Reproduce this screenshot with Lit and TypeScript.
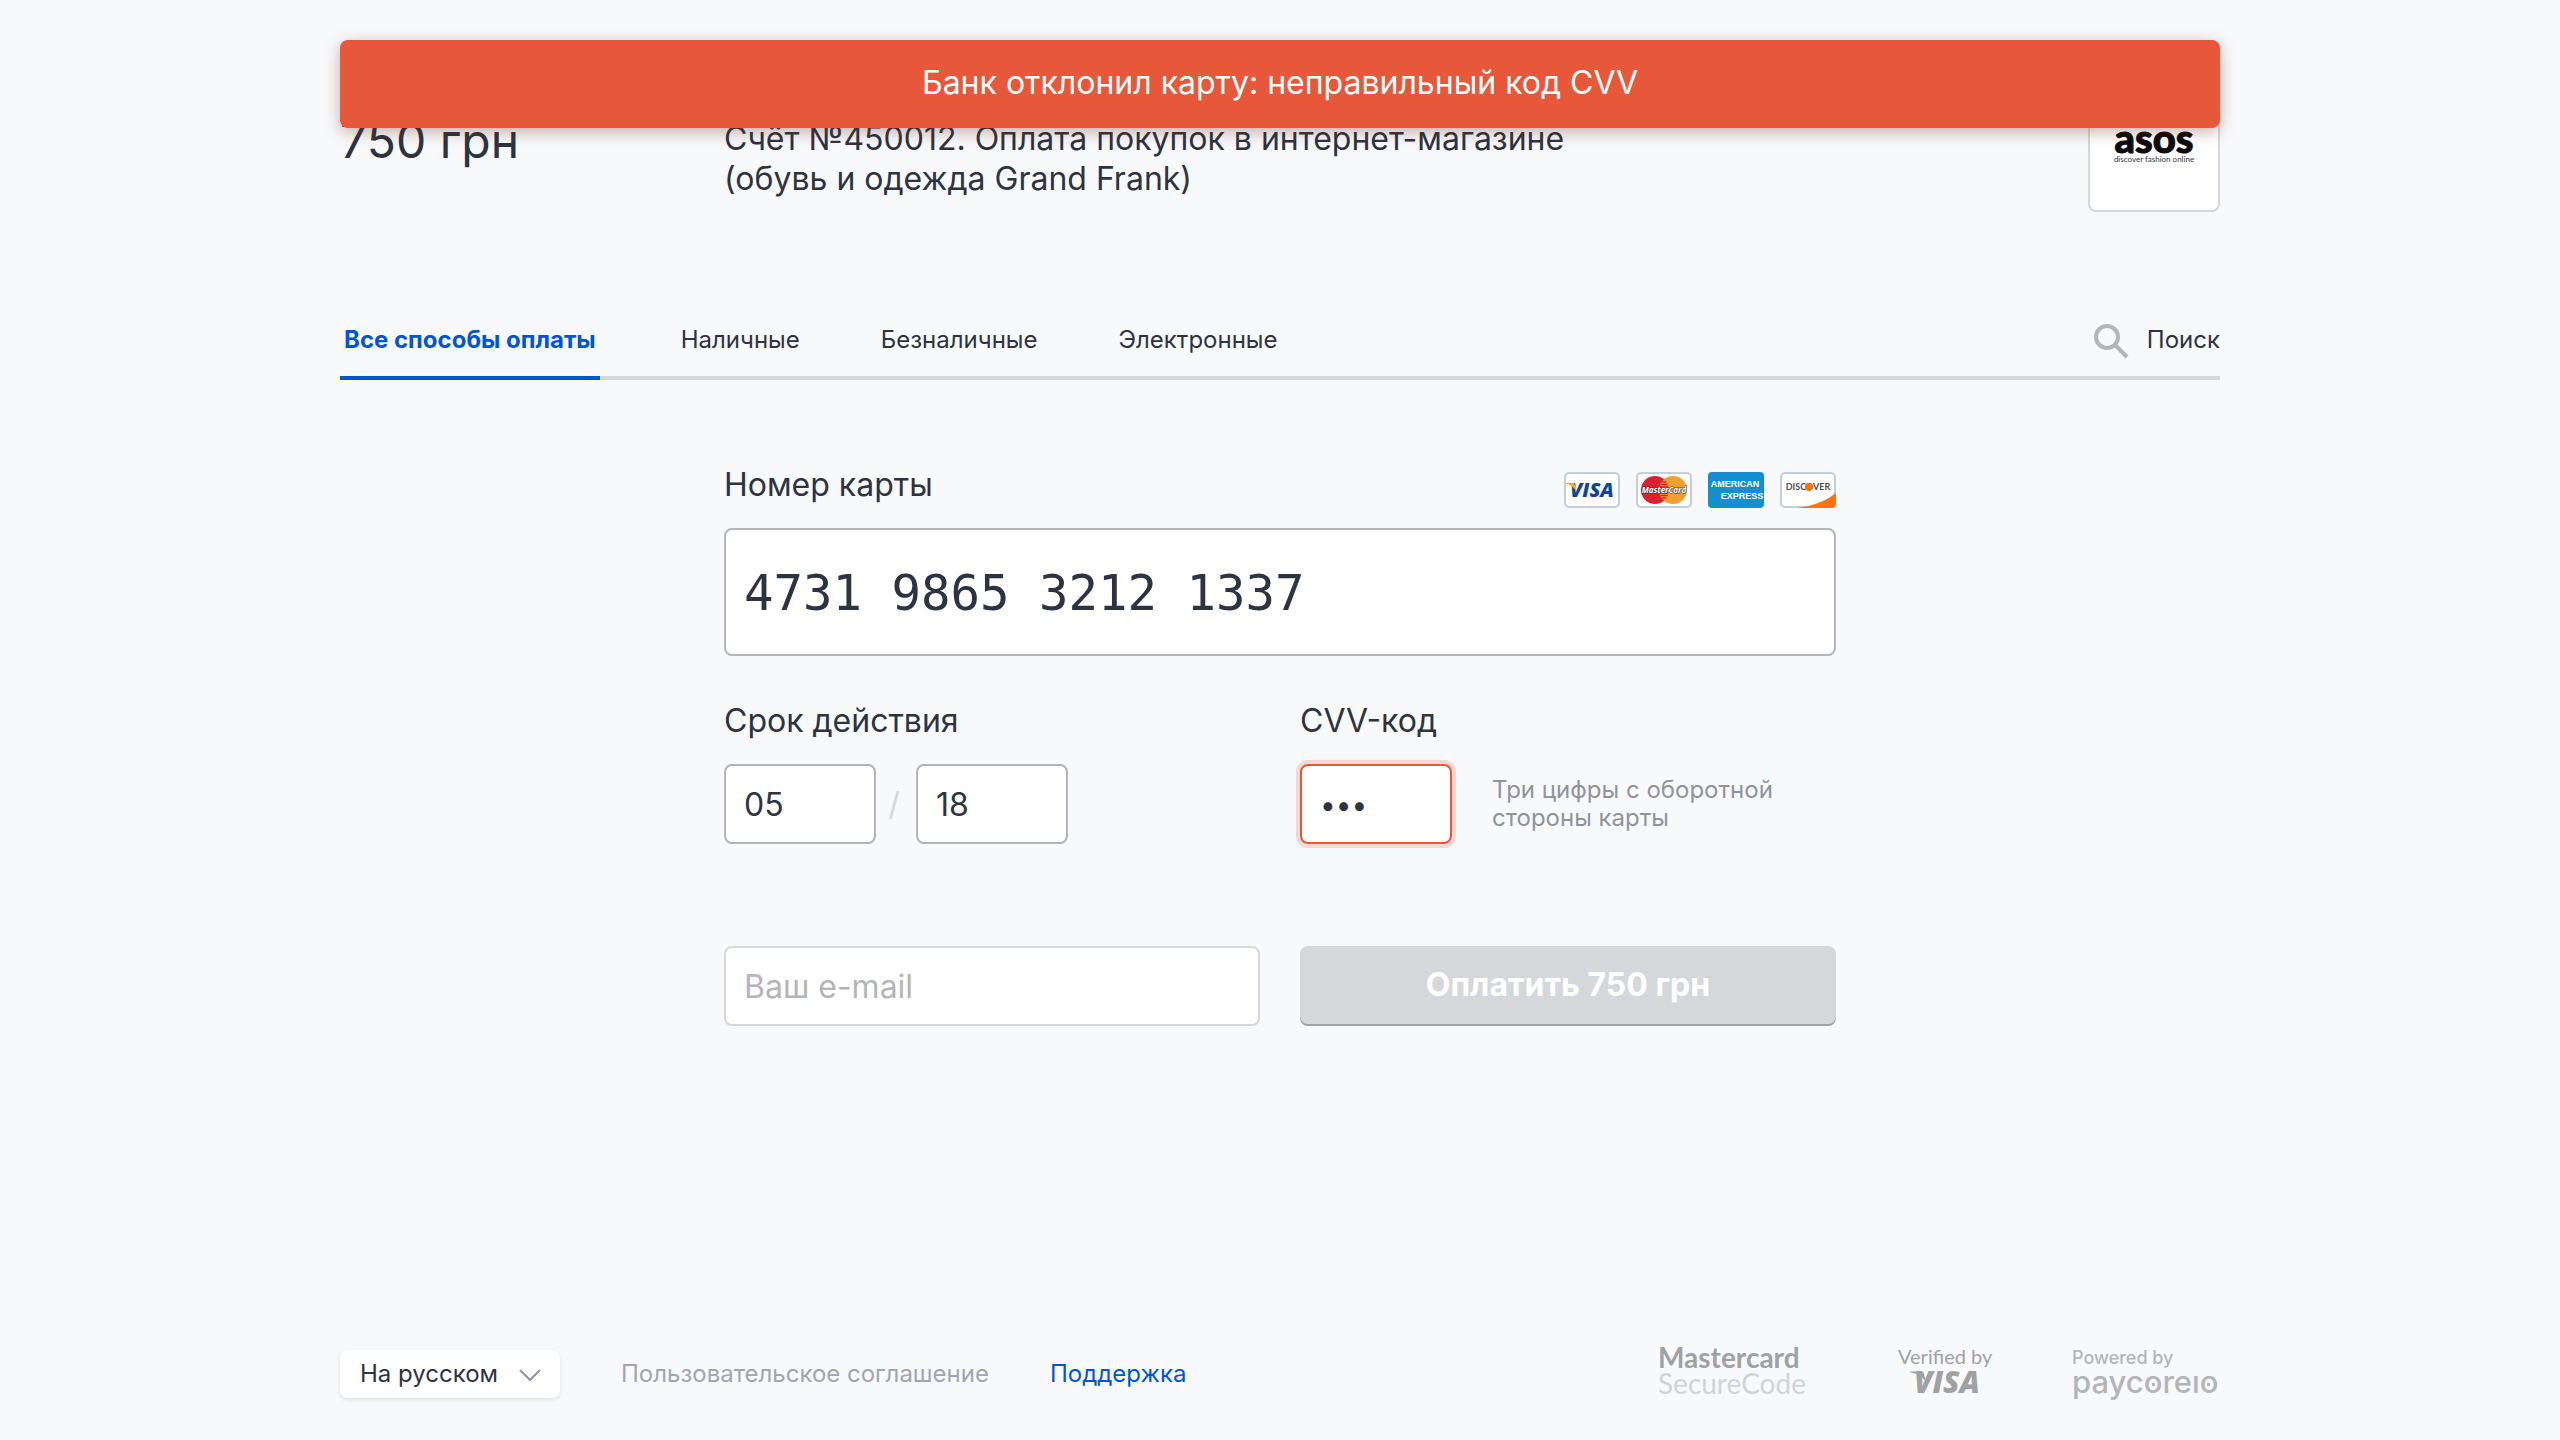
import { LitElement, html, css } from "lit";
import { customElement, state } from "lit/decorators.js";

const TABS = ["Все способы оплаты", "Наличные", "Безналичные", "Электронные"];

@customElement("card-brands")
class CardBrands extends LitElement {
  static styles = css`
    :host {
      display: flex;
      gap: 16px;
    }
    .brand {
      display: block;
      width: 56px;
      height: 36px;
    }
    .frame {
      fill: #ffffff;
      stroke: #c3cfdb;
      stroke-width: 2;
    }
    .visa {
      font: italic 800 20px "Open Sans", sans-serif;
      fill: #0f4595;
    }
    .master {
      font: italic 700 8px "Open Sans", sans-serif;
      fill: #ffffff;
      stroke: #30343c;
      stroke-width: 1;
      paint-order: stroke;
    }
    .amex {
      font: 700 9px "Liberation Sans", sans-serif;
      fill: #ffffff;
    }
    .discover {
      font: 700 9px "Lato", sans-serif;
      fill: #4b4e53;
    }
  `;

  render() {
    return html`
      <svg class="brand" viewBox="0 0 56 36" role="img" aria-label="Visa">
        <rect class="frame" x="1" y="1" width="54" height="34" rx="4" />
        <text class="visa" x="6" y="25">VISA</text>
        <path d="M2 11H9C10 11 10.500 11.500 11 13L13 20C10 15.500 6 12.500 2 11.500Z" fill="#f2ae14" />
      </svg>
      <svg class="brand" viewBox="0 0 56 36" role="img" aria-label="MasterCard">
        <rect class="frame" x="1" y="1" width="54" height="34" rx="4" />
        <circle cx="37" cy="18" r="14" fill="#f0a02f" />
        <circle cx="19" cy="18" r="14" fill="#db2130" />
        <path d="M28 7.300A14 14 0 0 1 28 28.700A14 14 0 0 1 28 7.300Z" fill="#f0a02f" />
        <path d="M26 10H30M24.500 12.500H31.500M24 15H32M24 21H32M24.500 23.500H31.500M26 26H30" stroke="#db2130" stroke-width="1.500" />
        <text class="master" x="28" y="21" text-anchor="middle">MasterCard</text>
      </svg>
      <svg class="brand" viewBox="0 0 56 36" role="img" aria-label="American Express">
        <rect width="56" height="36" rx="4" fill="#168fd0" />
        <text class="amex" x="27" y="15" text-anchor="middle">AMERICAN</text>
        <text class="amex" x="34" y="27" text-anchor="middle">EXPRESS</text>
      </svg>
      <svg class="brand" viewBox="0 0 56 36" role="img" aria-label="Discover">
        <rect class="frame" x="1" y="1" width="54" height="34" rx="4" />
        <path d="M17 36C33 34 46 29 56 21V32A4 4 0 0 1 52 36Z" fill="#f57514" />
        <text class="discover" x="28" y="18" text-anchor="middle">DISCOVER</text>
        <circle cx="29" cy="15" r="4" fill="#f57514" />
      </svg>
    `;
  }
}

@customElement("partner-logos")
class PartnerLogos extends LitElement {
  static styles = css`
    :host {
      display: flex;
      align-items: flex-start;
    }
    .logo {
      display: block;
      height: 56px;
      overflow: visible;
    }
    .secure {
      width: 148px;
      margin-right: 92px;
    }
    .verified {
      width: 92px;
      margin-right: 82px;
    }
    .paycore {
      width: 148px;
    }
    .mc {
      font: 700 28px "Lato", sans-serif;
      fill: #a0a1a3;
    }
    .sc {
      font: 400 28px "Lato", sans-serif;
      fill: #d2d3d5;
    }
    .vb {
      font: 400 20px "Lato", sans-serif;
      fill: #a0a1a3;
    }
    .vs {
      font: italic 800 30px "Open Sans", sans-serif;
      fill: #a0a1a3;
    }
    .pb {
      font: 500 18px "Inter", sans-serif;
      fill: #b4b5b7;
    }
    .pc {
      font: 500 31px "Inter", sans-serif;
      fill: #b4b5b7;
    }
  `;

  render() {
    return html`
      <svg class="logo secure" viewBox="0 0 148 56" role="img" aria-label="Mastercard SecureCode">
        <text class="mc" x="0" y="26">Mastercard</text>
        <text class="sc" x="0" y="52">SecureCode</text>
      </svg>
      <svg class="logo verified" viewBox="0 0 92 56" role="img" aria-label="Verified by Visa">
        <text class="vb" x="0" y="22">Verified by</text>
        <text class="vs" x="16" y="51">VISA</text>
        <path d="M12 29.500H23C25 29.500 25.500 30 26 32L28 40C24 34 18 31 12 30.500Z" fill="#a0a1a3" />
      </svg>
      <svg class="logo paycore" viewBox="0 0 148 56" role="img" aria-label="Powered by paycore io">
        <text class="pb" x="0" y="22">Powered by</text>
        <text class="pc" x="0" y="51">paycoreıo</text>
        <path d="M80 41H83V44H80ZM135 41H138V44H135Z" fill="#b4b5b7" />
      </svg>
    `;
  }
}

@customElement("app-root")
class AppRoot extends LitElement {
  @state() private active = 0;

  static styles = css`
    :host {
      display: block;
      background: #f8f9fb;
      color: #2d3340;
      font: 400 32px/40px "Inter", sans-serif;
    }
    *,
    *::before {
      box-sizing: border-box;
    }
    .page {
      position: relative;
      display: flex;
      flex-direction: column;
      min-height: 100vh;
      max-width: 1880px;
      margin: 0 auto;
      padding: 80px 0 42px;
    }
    .toast {
      position: absolute;
      top: 40px;
      left: 0;
      right: 0;
      padding: 23px 24px 25px;
      border-radius: 8px;
      background: #e75739;
      color: #ffffff;
      text-align: center;
      box-shadow: 0 4px 16px rgba(120, 40, 20, 0.36);
    }
    .header {
      display: grid;
      grid-template-columns: 344px minmax(0, 1fr) 132px;
      column-gap: 40px;
    }
    .amount {
      margin: 0;
      padding-top: 33px;
      font-size: 48px;
      line-height: 56px;
      font-weight: 400;
    }
    .purpose {
      max-width: 900px;
      margin: 0;
      padding-top: 39px;
    }
    .shop {
      width: 132px;
      height: 132px;
      border: 2px solid #d6d7db;
      border-radius: 8px;
      background: #ffffff;
    }
    .shop-logo {
      display: block;
      width: 100%;
    }
    .asos {
      font: 900 40px "Lato", sans-serif;
      fill: #0a0b0d;
      stroke: #0a0b0d;
      stroke-width: 1;
    }
    .tagline {
      font: 400 8px "Lato", sans-serif;
      fill: #33363c;
    }
    .tabs {
      display: flex;
      gap: 81px;
      margin-top: 110px;
      box-shadow: inset 0 -4px #d6d8dc;
      font-size: 24px;
      line-height: 36px;
    }
    .tab,
    .search {
      padding: 0 0 18px;
      border: 0;
      border-bottom: 4px solid transparent;
      background: none;
      color: inherit;
      font: inherit;
      cursor: pointer;
    }
    .tab.active {
      padding-left: 4px;
      padding-right: 4px;
      border-color: #0055d4;
      color: #0055d4;
      font-weight: 700;
    }
    .search {
      display: flex;
      gap: 18px;
      margin-left: auto;
    }
    .search-icon {
      width: 36px;
      height: 36px;
      overflow: visible;
    }
    .form {
      display: grid;
      grid-template-columns: 1fr 1fr;
      column-gap: 40px;
      width: 100%;
      max-width: 1112px;
      margin: 85px auto 0;
    }
    .field {
      display: flex;
      flex-direction: column;
      gap: 23px;
      min-width: 0;
    }
    .wide {
      grid-column: 1 / -1;
      margin-bottom: 45px;
    }
    .caption {
      display: flex;
      justify-content: space-between;
    }
    .brands {
      margin-top: 7px;
      height: 33px;
    }
    .row {
      display: flex;
      align-items: center;
    }
    .input {
      width: 100%;
      height: 80px;
      padding: 0 18px;
      border: 2px solid #b4b5b9;
      border-radius: 8px;
      background: #ffffff;
      color: inherit;
      font: inherit;
      outline: none;
    }
    .input::placeholder {
      color: #b4b5b9;
      opacity: 1;
    }
    .number {
      height: 128px;
      padding-top: 2px;
      font-family: "DejaVu Sans Mono", monospace;
      font-size: 49px;
    }
    .short {
      width: 152px;
      flex: none;
    }
    .slash {
      width: 40px;
      padding-right: 4px;
      text-align: center;
      color: #d6d7db;
    }
    .invalid {
      padding-top: 2px;
      border-color: #e75739;
      box-shadow: 0 0 0 4px #f4d8d3;
      font-size: 28px;
    }
    .hint {
      margin: 0 0 0 40px;
      max-width: 300px;
      font-size: 24px;
      line-height: 28px;
      color: #8f939e;
    }
    .email,
    .pay {
      margin-top: 102px;
    }
    .email {
      border-color: #d6d7db;
    }
    .pay {
      height: 80px;
      padding: 0 0 2px;
      border: 0;
      border-radius: 8px;
      background: #d6d7db;
      box-shadow: inset 0 -2px #a2a3a6;
      color: #ffffff;
      font: inherit;
      font-weight: 700;
    }
    .footer {
      display: flex;
      align-items: flex-start;
      margin-top: auto;
      font-size: 24px;
      line-height: 48px;
    }
    .links {
      display: flex;
      gap: 61px;
      padding-top: 8px;
    }
    .language {
      position: relative;
      display: block;
    }
    .select {
      display: block;
      appearance: none;
      width: 220px;
      height: 48px;
      padding: 0 52px 0 20px;
      border: 0;
      border-radius: 8px;
      background: #ffffff;
      box-shadow: 0 2px 4px rgba(40, 50, 70, 0.12);
      color: inherit;
      font: inherit;
    }
    .chevron {
      position: absolute;
      top: 18px;
      right: 18px;
      width: 24px;
      height: 14px;
      pointer-events: none;
    }
    .link {
      color: #a2a5ad;
      text-decoration: none;
    }
    .support {
      color: #0055d4;
    }
    .partners {
      margin-left: auto;
    }
  `;

  render() {
    return html`
      <div class="page">
        <div class="toast" role="alert">Банк отклонил карту: неправильный код CVV</div>
        <header class="header">
          <h1 class="amount">750 грн</h1>
          <p class="purpose">Счёт №450012. Оплата покупок в интернет-магазине (обувь и одежда Grand Frank)</p>
          <div class="shop">
            <svg class="shop-logo" viewBox="0 0 128 128" role="img" aria-label="asos">
              <text class="asos" x="64" y="71" text-anchor="middle">asos</text>
              <text class="tagline" x="64" y="80" text-anchor="middle">discover fashion online</text>
            </svg>
          </div>
        </header>

        <nav class="tabs">
          ${TABS.map(
            (name, i) => html`<button
              class="tab ${i === this.active ? "active" : ""}"
              @click=${() => (this.active = i)}
            >${name}</button>`
          )}
          <button class="search">
            <svg class="search-icon" viewBox="0 0 36 36" fill="none" stroke="#b4b5b7" stroke-width="4" aria-hidden="true">
              <circle cx="14" cy="15" r="11" />
              <path d="M22 23L34 35" />
            </svg>
            Поиск
          </button>
        </nav>

        <form class="form" @submit=${(e: Event) => e.preventDefault()}>
          <div class="field wide">
            <div class="caption">
              <label for="number">Номер карты</label>
              <card-brands class="brands"></card-brands>
            </div>
            <input class="input number" id="number" inputmode="numeric" value="4731 9865 3212 1337" />
          </div>

          <div class="field">
            <label for="month">Срок действия</label>
            <div class="row">
              <input class="input short" id="month" inputmode="numeric" value="05" />
              <span class="slash">/</span>
              <input class="input short" id="year" aria-label="Год" inputmode="numeric" value="18" />
            </div>
          </div>

          <div class="field">
            <label for="cvv">CVV-код</label>
            <div class="row">
              <input class="input short invalid" id="cvv" type="password" aria-invalid="true" aria-describedby="hint" value="133" />
              <p class="hint" id="hint">Три цифры с оборотной стороны карты</p>
            </div>
          </div>

          <input class="input email" type="email" aria-label="Ваш e-mail" placeholder="Ваш e-mail" />
          <button class="pay" disabled>Оплатить 750 грн</button>
        </form>

        <footer class="footer">
          <div class="links">
            <label class="language">
              <select class="select" aria-label="Язык">
                <option>На русском</option>
              </select>
              <svg class="chevron" viewBox="0 0 24 14" fill="none" stroke="#8f939e" stroke-width="2" aria-hidden="true">
                <path d="M2 2L12 12L22 2" />
              </svg>
            </label>
            <a class="link" href="#agreement">Пользовательское соглашение</a>
            <a class="link support" href="#support">Поддержка</a>
          </div>
          <partner-logos class="partners"></partner-logos>
        </footer>
      </div>
    `;
  }
}
